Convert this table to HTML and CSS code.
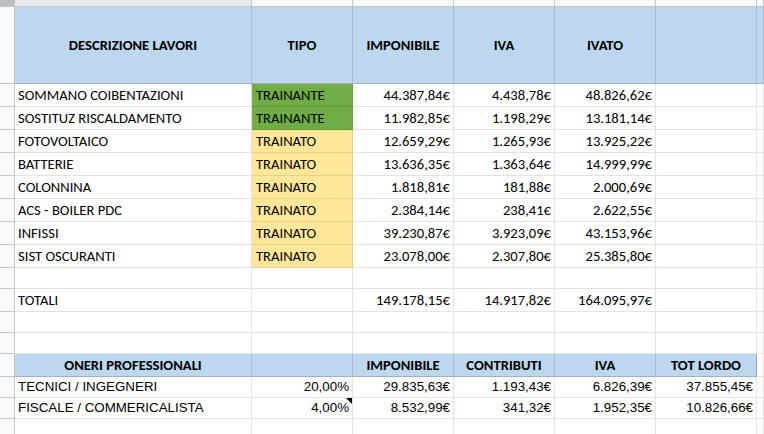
FILE: index.html
```html
<!DOCTYPE html>
<html lang="it">
<head>
<meta charset="utf-8">
<title>Superbonus</title>
<link rel="stylesheet" href="styles.css">
</head>
<body>
<div class="sheet">
  <div class="row r-colhead">
    <div class="rh corner"></div>
    <div class="colh sel"></div><div class="colh"></div><div class="colh"></div><div class="colh"></div><div class="colh"></div><div class="colh"></div><div class="colh"></div>
  </div>
  <div class="row r-head">
    <div class="rh"></div>
    <div class="c hd">DESCRIZIONE LAVORI</div>
    <div class="c hd">TIPO</div>
    <div class="c hd">IMPONIBILE</div>
    <div class="c hd">IVA</div>
    <div class="c hd">IVATO</div>
    <div class="c hd"></div>
    <div class="c hd"></div>
  </div>
  <div class="row r23">
    <div class="rh"></div>
    <div class="c">SOMMANO COIBENTAZIONI</div>
    <div class="c green">TRAINANTE</div>
    <div class="c num">44.387,84€</div>
    <div class="c num">4.438,78€</div>
    <div class="c num">48.826,62€</div>
    <div class="c"></div><div class="c"></div>
  </div>
  <div class="row r23">
    <div class="rh"></div>
    <div class="c">SOSTITUZ RISCALDAMENTO</div>
    <div class="c green">TRAINANTE</div>
    <div class="c num">11.982,85€</div>
    <div class="c num">1.198,29€</div>
    <div class="c num">13.181,14€</div>
    <div class="c"></div><div class="c"></div>
  </div>
  <div class="row r23">
    <div class="rh"></div>
    <div class="c">FOTOVOLTAICO</div>
    <div class="c yellow">TRAINATO</div>
    <div class="c num">12.659,29€</div>
    <div class="c num">1.265,93€</div>
    <div class="c num">13.925,22€</div>
    <div class="c"></div><div class="c"></div>
  </div>
  <div class="row r23">
    <div class="rh"></div>
    <div class="c">BATTERIE</div>
    <div class="c yellow">TRAINATO</div>
    <div class="c num">13.636,35€</div>
    <div class="c num">1.363,64€</div>
    <div class="c num">14.999,99€</div>
    <div class="c"></div><div class="c"></div>
  </div>
  <div class="row r23">
    <div class="rh"></div>
    <div class="c">COLONNINA</div>
    <div class="c yellow">TRAINATO</div>
    <div class="c num">1.818,81€</div>
    <div class="c num">181,88€</div>
    <div class="c num">2.000,69€</div>
    <div class="c"></div><div class="c"></div>
  </div>
  <div class="row r23">
    <div class="rh"></div>
    <div class="c">ACS - BOILER PDC</div>
    <div class="c yellow">TRAINATO</div>
    <div class="c num">2.384,14€</div>
    <div class="c num">238,41€</div>
    <div class="c num">2.622,55€</div>
    <div class="c"></div><div class="c"></div>
  </div>
  <div class="row r23">
    <div class="rh"></div>
    <div class="c">INFISSI</div>
    <div class="c yellow">TRAINATO</div>
    <div class="c num">39.230,87€</div>
    <div class="c num">3.923,09€</div>
    <div class="c num">43.153,96€</div>
    <div class="c"></div><div class="c"></div>
  </div>
  <div class="row r23">
    <div class="rh"></div>
    <div class="c">SIST OSCURANTI</div>
    <div class="c yellow">TRAINATO</div>
    <div class="c num">23.078,00€</div>
    <div class="c num">2.307,80€</div>
    <div class="c num">25.385,80€</div>
    <div class="c"></div><div class="c"></div>
  </div>
  <div class="row r21">
    <div class="rh"></div>
    <div class="c"></div><div class="c"></div><div class="c"></div><div class="c"></div><div class="c"></div><div class="c"></div><div class="c"></div>
  </div>
  <div class="row r23">
    <div class="rh"></div>
    <div class="c">TOTALI</div>
    <div class="c"></div>
    <div class="c num">149.178,15€</div>
    <div class="c num">14.917,82€</div>
    <div class="c num">164.095,97€</div>
    <div class="c"></div><div class="c"></div>
  </div>
  <div class="row r21">
    <div class="rh"></div>
    <div class="c"></div><div class="c"></div><div class="c"></div><div class="c"></div><div class="c"></div><div class="c"></div><div class="c"></div>
  </div>
  <div class="row r21">
    <div class="rh"></div>
    <div class="c"></div><div class="c"></div><div class="c"></div><div class="c"></div><div class="c"></div><div class="c"></div><div class="c"></div>
  </div>
  <div class="row r23">
    <div class="rh"></div>
    <div class="c hd2">ONERI PROFESSIONALI</div>
    <div class="c hd2"></div>
    <div class="c hd2">IMPONIBILE</div>
    <div class="c hd2">CONTRIBUTI</div>
    <div class="c hd2">IVA</div>
    <div class="c hd2 last">TOT LORDO</div>
    <div class="c"></div>
  </div>
  <div class="row r21 arial">
    <div class="rh"></div>
    <div class="c">TECNICI / INGEGNERI</div>
    <div class="c num">20,00%</div>
    <div class="c num">29.835,63€</div>
    <div class="c num">1.193,43€</div>
    <div class="c num">6.826,39€</div>
    <div class="c num">37.855,45€</div>
    <div class="c"></div>
  </div>
  <div class="row r21 arial">
    <div class="rh"></div>
    <div class="c">FISCALE / COMMERICALISTA</div>
    <div class="c num note">4,00%</div>
    <div class="c num">8.532,99€</div>
    <div class="c num">341,32€</div>
    <div class="c num">1.952,35€</div>
    <div class="c num">10.826,66€</div>
    <div class="c"></div>
  </div>
  <div class="row r21">
    <div class="rh"></div>
    <div class="c"></div><div class="c"></div><div class="c"></div><div class="c"></div><div class="c"></div><div class="c"></div><div class="c"></div>
  </div>
</div>
</body>
</html>
```

FILE: styles.css
```css
html, body {
  margin: 0;
  padding: 0;
  background: #ffffff;
  overflow: hidden;
}

.sheet {
  width: 764px;
  height: 434px;
  overflow: hidden;
  font-family: Calibri, Carlito, Lato, "Liberation Sans", sans-serif;
  font-size: 14.6px;
  color: #000;
}

.row {
  display: grid;
  grid-template-columns: 15px 237px 101px 101px 101px 101px 101px 1fr;
}

.r-colhead { height: 7px; }
.r-head { height: 77px; }
.r23 { height: 23px; }
.r21 { height: 21px; }

.rh {
  background: #f8f9fa;
  border-right: 1px solid #c4c7c5;
  border-bottom: 1px solid #c4c7c5;
  box-sizing: border-box;
}

.corner {
  background: #bdbdbd;
}

.colh {
  background: #f8f9fa;
  border-right: 1px solid #c4c7c5;
  border-bottom: 1px solid #c4c7c5;
  box-sizing: border-box;
}

.colh.sel {
  background: #e8eaed;
}

.c {
  box-sizing: border-box;
  border-right: 1px solid rgba(0, 0, 0, 0.11);
  border-bottom: 1px solid rgba(0, 0, 0, 0.11);
  display: flex;
  align-items: flex-end;
  padding: 0 3px 2px 3px;
  white-space: nowrap;
  overflow: hidden;
  line-height: 17px;
  position: relative;
}

.num {
  justify-content: flex-end;
}

.hd {
  background: #bdd7ee;
  font-weight: bold;
  justify-content: center;
  align-items: center;
  padding: 0;
  border-right-color: #a7bccf;
  border-bottom-color: #9fb0c0;
}

.hd2 {
  background: #bdd7ee;
  font-weight: bold;
  justify-content: center;
  align-items: center;
  padding: 0;
  border-right-color: #a7bccf;
  border-bottom-color: #9fb0c0;
}

.hd2.last {
  border-right-color: #8fa6bd;
}

.green {
  background: #70ad47;
  border-right-color: rgba(0, 0, 0, 0.08);
  border-bottom-color: rgba(0, 0, 0, 0.12);
  padding-left: 4px;
}

.yellow {
  background: #ffe699;
  border-right-color: #e6cf86;
  border-bottom-color: #e6cf86;
  padding-left: 4px;
}

.arial .c {
  font-family: "Liberation Sans", Arial, sans-serif;
  font-size: 13.33px;
  line-height: 16px;
  padding-bottom: 2px;
}

.note::after {
  content: "";
  position: absolute;
  top: 0;
  right: 0;
  width: 0;
  height: 0;
  border-top: 6px solid #000;
  border-left: 6px solid transparent;
}
```
